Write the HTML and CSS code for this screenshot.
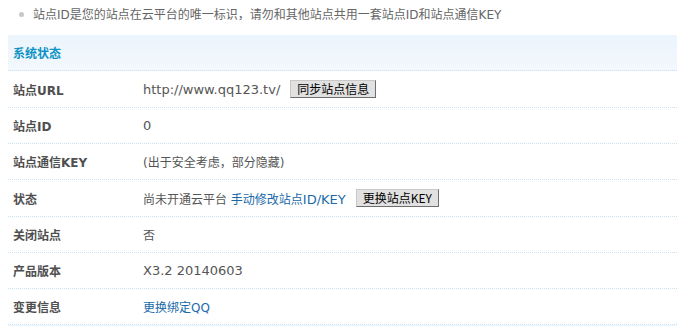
FILE: index.html
```html
<!DOCTYPE html>
<html lang="zh-CN">
<head>
<meta charset="utf-8">
<title>系统状态</title>
<link rel="stylesheet" href="styles.css">
</head>
<body>
<ul class="tips">
  <li>站点ID是您的站点在云平台的唯一标识，请勿和其他站点共用一套站点ID和站点通信KEY</li>
</ul>
<div class="panel">
  <div class="panel-head">系统状态</div>
  <div class="row row-tall">
    <div class="label">站点URL</div>
    <div class="value"><span class="en">http://www.qq123.tv/</span> <button class="btn" type="button">同步站点信息</button></div>
  </div>
  <div class="row">
    <div class="label">站点ID</div>
    <div class="value"><span class="en">0</span></div>
  </div>
  <div class="row">
    <div class="label">站点通信KEY</div>
    <div class="value">(出于安全考虑，部分隐藏)</div>
  </div>
  <div class="row row-tall">
    <div class="label">状态</div>
    <div class="value">尚未开通云平台 <a href="#" class="link">手动修改站点<span class="en">ID/KEY</span></a> <button class="btn" type="button">更换站点KEY</button></div>
  </div>
  <div class="row">
    <div class="label">关闭站点</div>
    <div class="value">否</div>
  </div>
  <div class="row">
    <div class="label">产品版本</div>
    <div class="value"><span class="en">X3.2 20140603</span></div>
  </div>
  <div class="row">
    <div class="label">变更信息</div>
    <div class="value"><a href="#" class="link">更换绑定QQ</a></div>
  </div>
  <div class="panel-foot"></div>
</div>
</body>
</html>
```

FILE: styles.css
```css
html, body {
  margin: 0;
  padding: 0;
  background: #fff;
}
body {
  padding: 8px;
  font-family: "DejaVu Sans", "Noto Sans CJK SC", sans-serif;
  font-size: 12px;
  color: #666;
}
.tips {
  list-style: none;
  margin: 0;
  padding: 0 0 0 11px;
  height: 27px;
}
.tips li {
  position: relative;
  padding-left: 14px;
  line-height: 14px;
  color: #666;
}
.tips li::before {
  content: "";
  position: absolute;
  left: 0;
  top: 4px;
  width: 5px;
  height: 5px;
  border-radius: 50%;
  background: #c8c8c8;
}
.panel {
  width: 669px;
}
.panel-head {
  box-sizing: border-box;
  height: 36px;
  padding-left: 5px;
  display: flex;
  align-items: center;
  background: linear-gradient(#ecf4fc, #f2f8fd);
  border-bottom: 1px dotted #c6e2f4;
  color: #0b93c4;
  font-weight: bold;
  font-size: 12px;
}
.row {
  box-sizing: border-box;
  height: 36px;
  display: flex;
  align-items: center;
  border-bottom: 1px dotted #c6e2f4;
}
.row-tall {
  height: 37px;
}
.label {
  width: 130px;
  padding-left: 5px;
  font-weight: bold;
  color: #4f4f4f;
}
.value {
  display: flex;
  align-items: center;
  white-space: pre;
  color: #555;
}
.en {
  font-size: 13px;
}
.link {
  color: #1a6aa9;
  text-decoration: none;
}
.btn {
  margin-left: 10px;
  height: 18px;
  padding: 0 6px;
  font-family: "Noto Sans CJK SC", "DejaVu Sans", sans-serif;
  font-size: 12px;
  line-height: 14px;
  color: #000;
  background: #e1e1e1;
  border: 1px solid;
  border-color: #c8c8c8 #6e6e6e #6e6e6e #c8c8c8;
  border-radius: 0;
}
.panel-foot {
  height: 4px;
  background: #eef5fc;
}
```
